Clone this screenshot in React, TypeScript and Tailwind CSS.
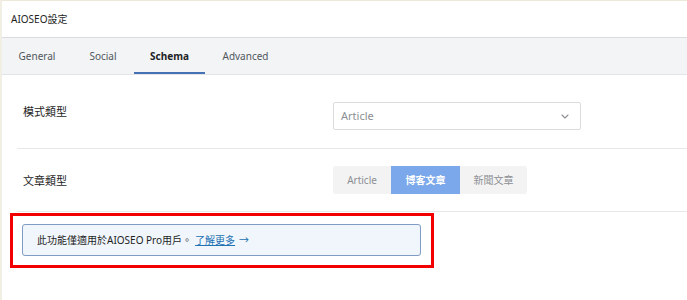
import type { FC } from 'react';

const FONT = '"Noto Sans", "Noto Sans CJK TC", sans-serif';

const tabs = [
  { label: 'General', width: 'w-[70px]' },
  { label: 'Social', width: 'w-[62px]' },
  { label: 'Schema', width: 'w-[71px]' },
  { label: 'Advanced', width: 'w-[81px]' },
];
const active = 'Schema';

const articleTypes = [
  { label: 'Article', width: 'w-[58px]' },
  { label: '博客文章', width: 'w-[69px]' },
  { label: '新聞文章', width: 'w-[67px]' },
];

const Chevron: FC = () => (
  <svg width="8" height="5" viewBox="0 0 8 5" fill="none" className="text-[#8c8f94]">
    <path d="M1 1l3 3 3-3" stroke="currentColor" strokeWidth="1.1" strokeLinecap="round" strokeLinejoin="round" />
  </svg>
);

const App: FC = () => {
  return (
    <div className="flex h-[300px] w-[687px] overflow-hidden bg-white text-[#1e1e1e]" style={{ fontFamily: FONT }}>
      <div className="w-[2px] shrink-0 bg-[#f1efe4]" />
      <div className="flex min-w-0 flex-1 flex-col border-t border-[#ece9d8]">
        {/* header */}
        <div className="flex h-[37px] items-center border-b border-[#dcdcde] pl-[9px] pt-[1px] text-[10px]">
          AIOSEO設定
        </div>

        {/* tabs */}
        <div className="flex h-[37px] border-b border-[#e2e4e7] bg-[#f3f4f5]">
          {tabs.map(tab => (
            <div
              key={tab.label}
              className={
                tab.label === active
                  ? `${tab.width} flex items-center justify-center border-b-2 border-[#4472b4] pt-[2px] text-[10px] font-bold text-[#1d2327]`
                  : `${tab.width} flex items-center justify-center text-[10px] text-[#50575e]`
              }
            >
              {tab.label}
            </div>
          ))}
        </div>

        {/* content */}
        <div className="ml-[15px] flex flex-col">
          <div className="flex items-start border-b border-[#e8e8e8] pb-[18px] pt-[27px]">
            <div className="w-[316px] pl-[6px] pt-[2px] text-[11px] leading-[16px]">模式類型</div>
            <div className="flex h-[28px] w-[248px] items-center justify-between rounded-[2px] border border-[#dcdcde] pl-[7px] pr-[11px] text-[11px] text-[#8c8f94]">
              <span>Article</span>
              <Chevron />
            </div>
          </div>

          <div className="flex items-center border-b border-[#e8e8e8] py-[17px]">
            <div className="w-[316px] pl-[6px] pt-[2px] text-[11px]">文章類型</div>
            <div className="flex h-[28px] overflow-hidden rounded-[3px] bg-[#f3f3f3] text-[10px]">
              {articleTypes.map(t => (
                <div
                  key={t.label}
                  className={
                    t.label === '博客文章'
                      ? `${t.width} flex items-center justify-center bg-[#7ba8ea] font-semibold text-white`
                      : `${t.width} flex items-center justify-center text-[#8c8f94]`
                  }
                >
                  {t.label}
                </div>
              ))}
            </div>
          </div>
        </div>

        {/* notice */}
        <div className="ml-[8px] mt-[1px] w-[424px] border-[3px] border-[#f20000] pb-[9px] pl-[9px] pr-[10px] pt-[8px]">
          <div className="flex h-[32px] items-center rounded-[3px] border border-[#7f9cc4] bg-[#f0f6fc] pl-[14px] text-[10px]">
            <span>此功能僅適用於AIOSEO Pro用戶。</span>
            <a href="#" className="ml-[3px] text-[#2271b1] underline">了解更多</a>
            <span className="ml-[4px] text-[#2271b1]">→</span>
          </div>
        </div>
      </div>
    </div>
  );
};

export default App;
